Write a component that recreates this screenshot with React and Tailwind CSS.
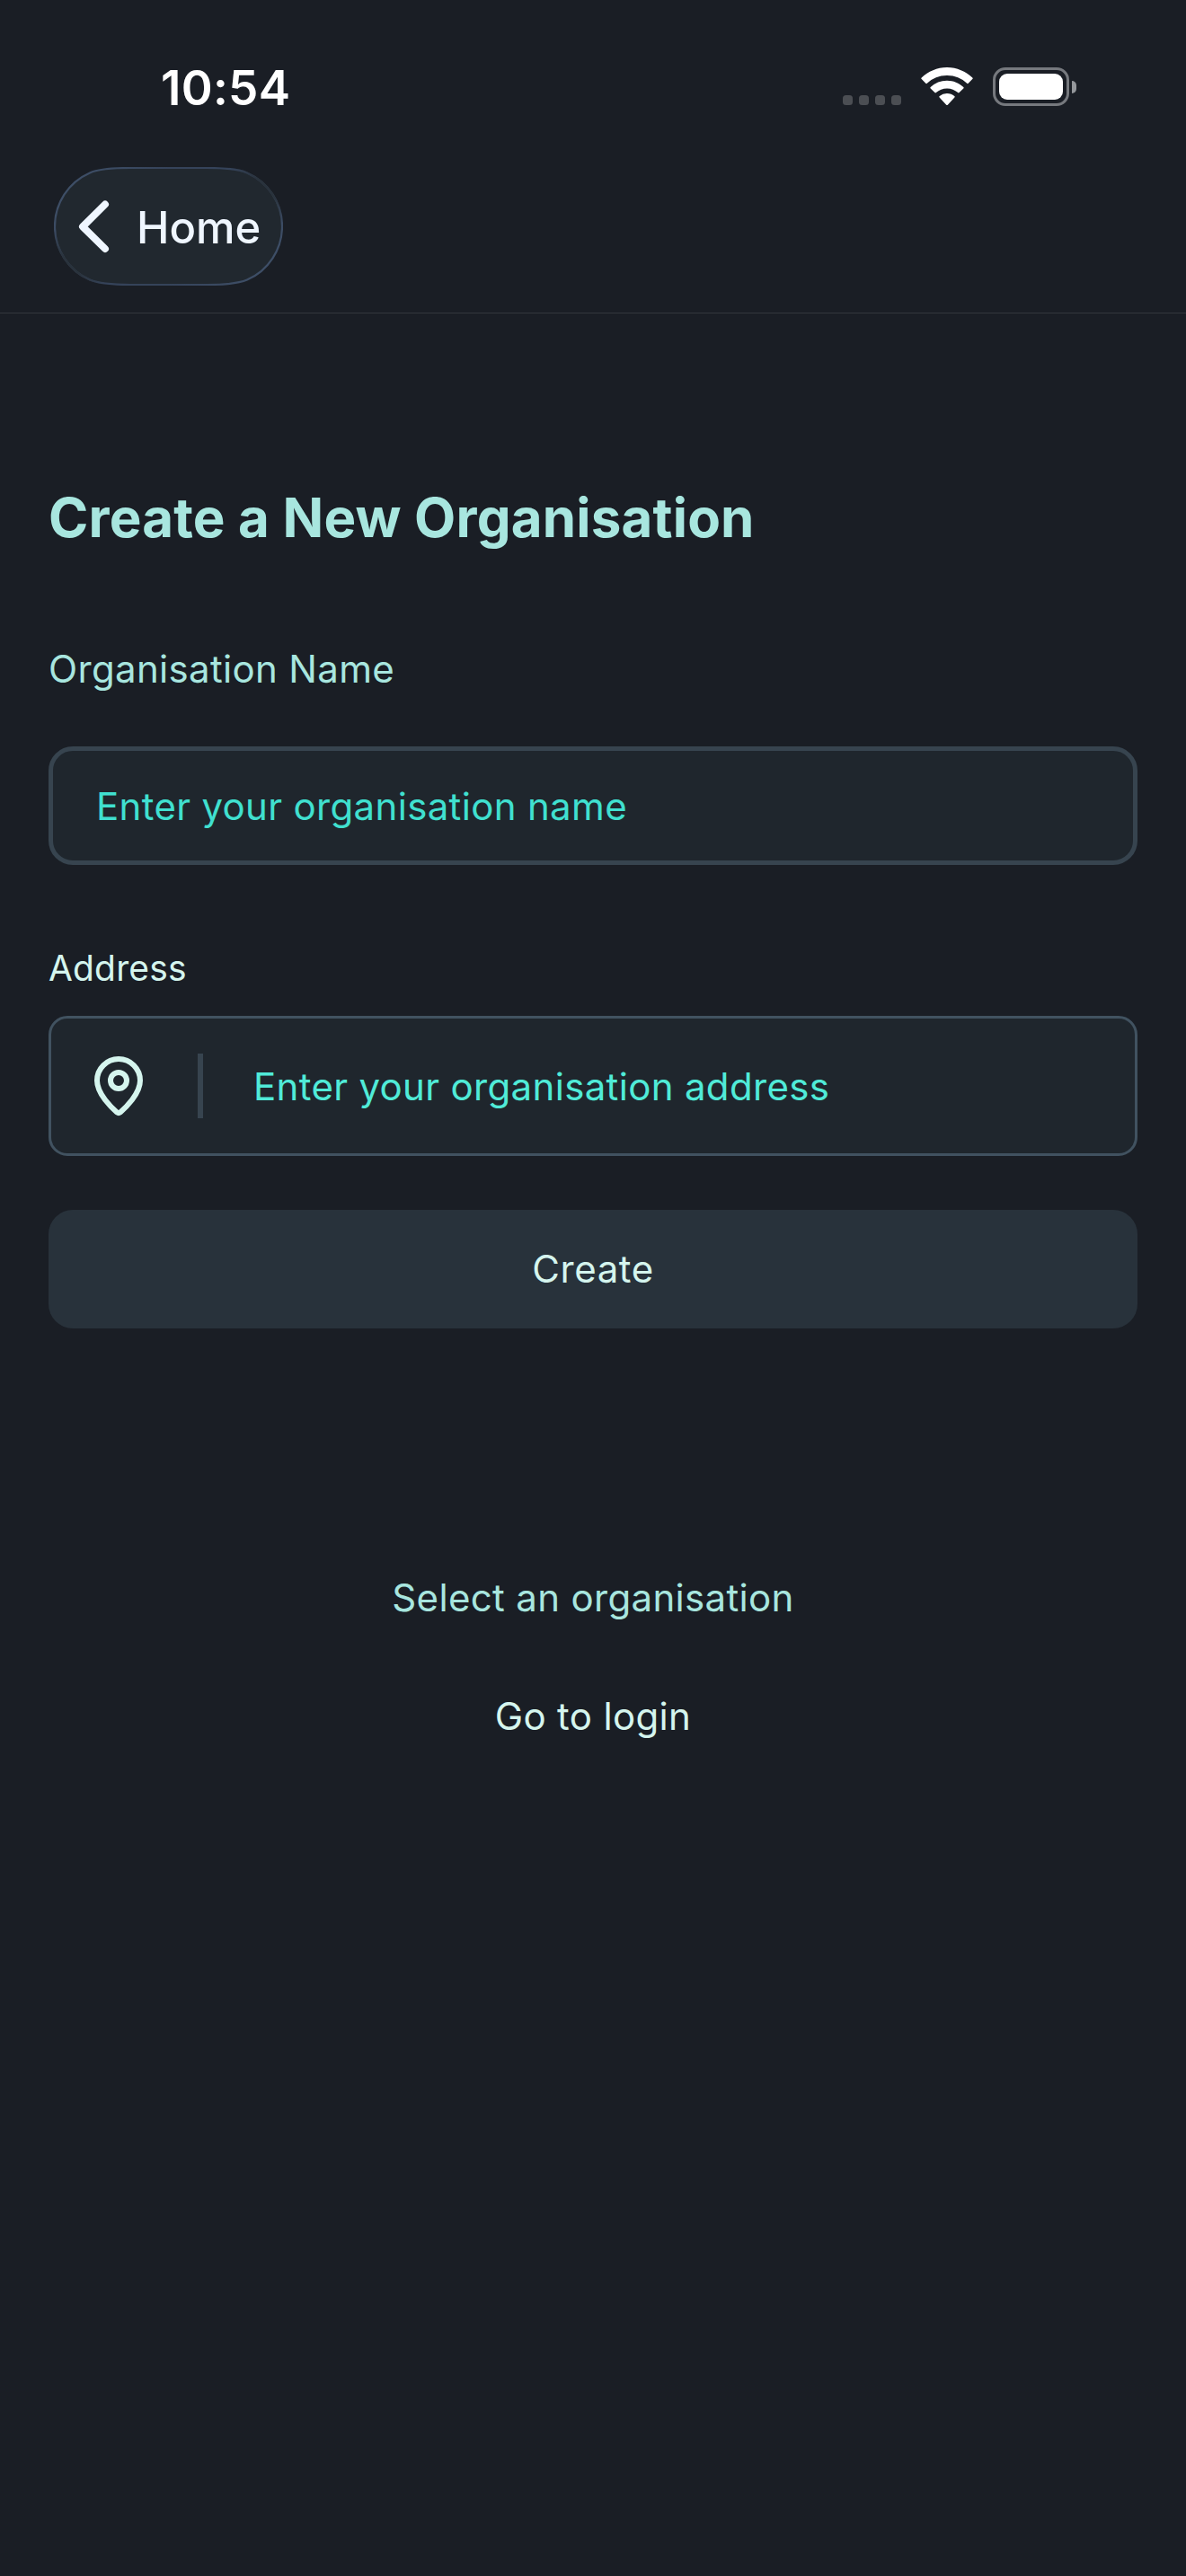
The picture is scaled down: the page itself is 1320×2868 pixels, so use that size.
import React from "react";

function WifiIcon() {
  return (
    <svg className="h-[43px] w-[58px]" viewBox="0 0 58 43" fill="#fff" aria-hidden="true">
      <path d="M29 0c11 0 21 4.500 28.300 11.600a1 1 0 0 1 0 1.500l-4.600 4.600a1 1 0 0 1-1.500 0A32 32 0 0 0 29 9a32 32 0 0 0-22.200 8.700a1 1 0 0 1-1.500 0L.7 13.100a1 1 0 0 1 0-1.500C8 4.500 18 0 29 0Z" />
      <path d="M29 14.700c7 0 13.500 2.800 18.300 7.300a1 1 0 0 1 0 1.500l-4.700 4.600a1 1 0 0 1-1.500 0A17.700 17.700 0 0 0 29 23.400c-4.600 0-8.900 1.700-12.100 4.700a1 1 0 0 1-1.500 0l-4.700-4.600a1 1 0 0 1 0-1.500A26.600 26.600 0 0 1 29 14.700Z" />
      <path d="M29 29c3.200 0 6.100 1.100 8.300 3a1 1 0 0 1 .1 1.500l-7.600 8.200a1.100 1.100 0 0 1-1.600 0l-7.600-8.200a1 1 0 0 1 .1-1.500A12.600 12.600 0 0 1 29 29Z" />
    </svg>
  );
}

function BatteryIcon() {
  return (
    <div className="flex items-center gap-[3px]">
      <div className="h-[43px] w-[85px] rounded-[14px] border-[3px] border-[#76797e] p-1">
        <div className="h-full w-full rounded-[9px] bg-white" />
      </div>
      <div className="h-3.5 w-[5px] rounded-r-full bg-[#94979b]" />
    </div>
  );
}

function StatusBar() {
  return (
    <div className="flex h-[186px] items-start justify-between pr-[122px] pl-[179px]">
      <div className="mt-[66px] text-[53px] leading-[64px] font-semibold tracking-[0.27px] text-white">10:54</div>
      <div className="mt-[75px] flex items-start">
        <div className="mt-[31px] flex gap-[7px]">
          {[0, 1, 2, 3].map((dot) => (
            <div key={dot} className="size-[11px] rounded-[3.500px] bg-[#4b4e53]" />
          ))}
        </div>
        <div className="ml-[22px]">
          <WifiIcon />
        </div>
        <div className="ml-[22px]">
          <BatteryIcon />
        </div>
      </div>
    </div>
  );
}

function BackButton() {
  return (
    <button className="relative flex h-[132px] w-[255px] items-center">
      <svg className="absolute inset-0" width="255" height="132" viewBox="0 0 255 132" fill="none" aria-hidden="true">
        <defs>
          <linearGradient id="rim" x1="20" y1="-30" x2="235" y2="162" gradientUnits="userSpaceOnUse">
            <stop offset="0" stopColor="#42546d" />
            <stop offset="0.35" stopColor="#35435a" />
            <stop offset="0.65" stopColor="#35435a" />
            <stop offset="1" stopColor="#42546d" />
          </linearGradient>
          <radialGradient id="fadeTop" cx="232" cy="26" r="42" gradientUnits="userSpaceOnUse">
            <stop offset="0" stopColor="#29323b" />
            <stop offset="0.3" stopColor="#29323b" />
            <stop offset="1" stopColor="#29323b" stopOpacity="0" />
          </radialGradient>
          <radialGradient id="fadeBottom" cx="23" cy="106" r="42" gradientUnits="userSpaceOnUse">
            <stop offset="0" stopColor="#29323b" />
            <stop offset="0.3" stopColor="#29323b" />
            <stop offset="1" stopColor="#29323b" stopOpacity="0" />
          </radialGradient>
          <path
            id="pill"
            d="M1 66A65 65 0 0 1 40 6.400C48 2.900 62 1 85 1H170C193 1 207 2.900 215 6.400A65 65 0 0 1 254 66A65 65 0 0 1 215 125.600C207 129.100 193 131 170 131H85C62 131 48 129.100 40 125.600A65 65 0 0 1 1 66Z"
          />
        </defs>
        <use href="#pill" fill="#21282f" stroke="url(#rim)" strokeWidth="2.200" />
        <use href="#pill" stroke="url(#fadeTop)" strokeWidth="2.200" />
        <use href="#pill" stroke="url(#fadeBottom)" strokeWidth="2.200" />
      </svg>
      <svg className="relative ml-[27px] h-[60px] w-9" viewBox="0 0 36 60" fill="none" stroke="#eff6ff" strokeWidth="8" strokeLinecap="round" strokeLinejoin="round" aria-hidden="true">
        <path d="M30 5.500 5 30.300 30 55" />
      </svg>
      <span className="relative ml-[29px] pt-1 text-[49px] leading-[60px] font-medium text-[#eff6ff]">Home</span>
    </button>
  );
}

function PinIcon() {
  return (
    <svg className="size-[72px]" viewBox="0 0 24 24" fill="none" stroke="#d5f5ee" strokeWidth="2" strokeLinecap="round" strokeLinejoin="round" aria-hidden="true">
      <path d="M20 10c0 4.993-5.539 10.193-7.399 11.799a1 1 0 0 1-1.202 0C9.539 20.193 4 14.993 4 10a8 8 0 0 1 16 0" />
      <circle cx="12" cy="10" r="3" />
    </svg>
  );
}

export default function App() {
  return (
    <div className="flex h-[2868px] w-[1320px] flex-col bg-[#1a1e25] font-['Inter',sans-serif]">
      <header className="h-[349px] border-b border-[#33373d]">
        <StatusBar />
        <div className="pl-[60px]">
          <BackButton />
        </div>
      </header>

      <main className="flex flex-col px-[54px] pt-[191px] text-[42px] tracking-[0.33px]">
        <h1 className="text-[60px] leading-[72px] font-bold tracking-[0.18px] text-[#a8e6df]">Create a New Organisation</h1>

        <label className="mt-[103px] leading-[60px] text-[#a8e6df]">Organisation Name</label>
        <div className="mt-[56px] flex h-[132px] items-center rounded-[27px] border-[5px] border-[#37444f] bg-[#1f262d] pl-[48px] text-[#40e0d0]">
          Enter your organisation name
        </div>

        <label className="mt-[88px] text-[39px] leading-[54px] tracking-[0.16px] text-[#d5f5ee]">Address</label>
        <div className="mt-[26px] flex h-[156px] items-center rounded-[21px] border-[3px] border-[#415260] bg-[#1f262d] pl-[39px] text-[#50ebd8]">
          <PinIcon />
          <div className="ml-[52px] h-[72px] w-[6px] bg-[#37444f]" />
          <span className="ml-[56px]">Enter your organisation address</span>
        </div>

        <button className="mt-[60px] h-[132px] rounded-[27px] bg-[#28323b] pb-0.5 tracking-[0.6px] text-[#d5f5ee]">Create</button>

        <div className="mt-[234px] flex flex-col">
          <button className="h-[132px] pb-0.5 text-[#a8e6df]">Select an organisation</button>
          <button className="h-[132px] pb-0.5 text-[#d5f5ee]">Go to login</button>
        </div>
      </main>
    </div>
  );
}
